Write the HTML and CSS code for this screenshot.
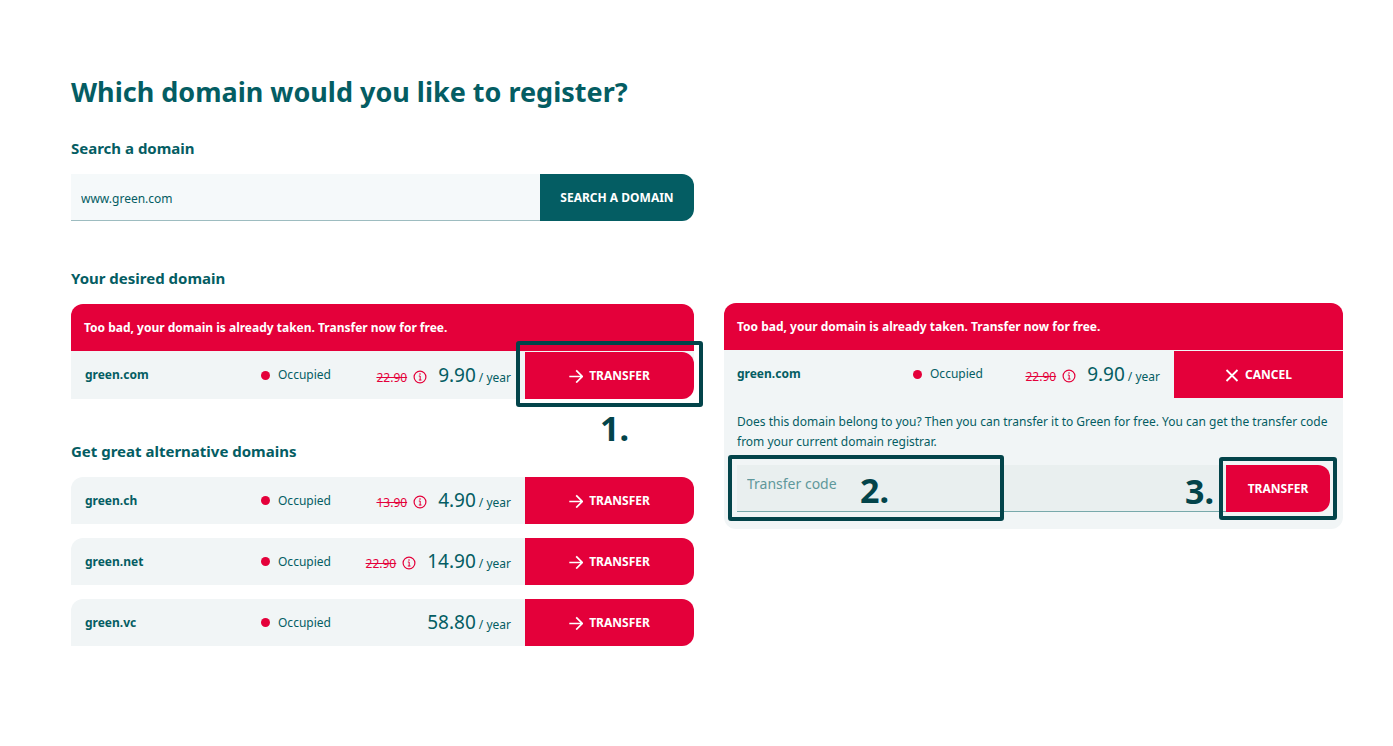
FILE: index.html
```html
<!DOCTYPE html>
<html lang="en">
<head>
<meta charset="utf-8">
<meta name="viewport" content="width=device-width, initial-scale=1">
<title>Register a domain</title>
<link rel="stylesheet" href="styles.css">
</head>
<body>
<svg class="sprite" aria-hidden="true">
  <symbol id="arrow" viewBox="0 0 14 14"><path d="M0.3 7.5H13M7.2 1.4L13.2 7.5L7.2 13.6" fill="none" stroke="currentColor" stroke-width="1.7"/></symbol>
  <symbol id="cross" viewBox="0 0 14 14"><path d="M1.5 2L12.5 13M12.5 2L1.5 13" fill="none" stroke="currentColor" stroke-width="1.8"/></symbol>
  <symbol id="info" viewBox="0 0 14 14"><circle cx="7" cy="7" r="5.9" fill="none" stroke="currentColor" stroke-width="1.2"/><path d="M5.8 6H7.2V10.2M5.8 10H8.5" fill="none" stroke="currentColor"/><circle cx="7" cy="4" r="0.8" fill="currentColor"/></symbol>
</svg>
<main class="page">
  <section class="column">
    <h1 class="title">Which domain would you like to register?</h1>
    <form class="search">
      <label class="heading" for="domain">Search a domain</label>
      <div class="field-row">
        <input class="field" id="domain" type="text" value="www.green.com">
        <button class="button button-teal" type="button">SEARCH A DOMAIN</button>
      </div>
    </form>
    <h2 class="heading">Your desired domain</h2>
    <div class="result">
      <p class="banner">Too bad, your domain is already taken. Transfer now for free.</p>
      <div class="row row-joined">
        <strong class="name">green.com</strong>
        <span class="status">Occupied</span>
        <span class="price"><s class="old">22.90</s><svg class="info"><use href="#info"/></svg><span class="amount">9.90</span><span class="unit">/ year</span></span>
        <div class="action marked mark-one">
          <button class="button" type="button"><svg class="icon"><use href="#arrow"/></svg>TRANSFER</button>
          <span class="step step-one">1.</span>
        </div>
      </div>
    </div>
    <h2 class="heading">Get great alternative domains</h2>
    <div class="list">
      <div class="row">
        <strong class="name">green.ch</strong>
        <span class="status">Occupied</span>
        <span class="price"><s class="old">13.90</s><svg class="info"><use href="#info"/></svg><span class="amount">4.90</span><span class="unit">/ year</span></span>
        <div class="action"><button class="button" type="button"><svg class="icon"><use href="#arrow"/></svg>TRANSFER</button></div>
      </div>
      <div class="row">
        <strong class="name">green.net</strong>
        <span class="status">Occupied</span>
        <span class="price"><s class="old">22.90</s><svg class="info"><use href="#info"/></svg><span class="amount">14.90</span><span class="unit">/ year</span></span>
        <div class="action"><button class="button" type="button"><svg class="icon"><use href="#arrow"/></svg>TRANSFER</button></div>
      </div>
      <div class="row">
        <strong class="name">green.vc</strong>
        <span class="status">Occupied</span>
        <span class="price"><span class="amount">58.80</span><span class="unit">/ year</span></span>
        <div class="action"><button class="button" type="button"><svg class="icon"><use href="#arrow"/></svg>TRANSFER</button></div>
      </div>
    </div>
  </section>
  <section class="column column-transfer">
    <div class="panel">
      <p class="banner">Too bad, your domain is already taken. Transfer now for free.</p>
      <div class="row row-joined">
        <strong class="name">green.com</strong>
        <span class="status">Occupied</span>
        <span class="price"><s class="old">22.90</s><svg class="info"><use href="#info"/></svg><span class="amount">9.90</span><span class="unit">/ year</span></span>
        <div class="action"><button class="button button-square" type="button"><svg class="icon"><use href="#cross"/></svg>CANCEL</button></div>
      </div>
      <p class="note">Does this domain belong to you? Then you can transfer it to Green for free. You can get the transfer code from your current domain registrar.</p>
      <form class="field-row transfer">
        <input class="field field-code" type="text" placeholder="Transfer code" aria-label="Transfer code">
        <div class="submit marked mark-three">
          <button class="button" type="button">TRANSFER</button>
          <span class="step step-three">3.</span>
        </div>
        <span class="frame-two"><span class="step step-two">2.</span></span>
      </form>
    </div>
  </section>
</main>
</body>
</html>
```
FILE: styles.css
```css
:root {
  --teal: #045d63;
  --ink: #03444a;
  --red: #e4003a;
  --pale: #f1f5f6;
}
* { box-sizing: border-box; }
body {
  margin: 0;
  background: #fff;
  color: var(--teal);
  font: 12px/20px "Noto Sans", "Open Sans", sans-serif;
}
h1, h2, p { margin: 0; }
.sprite { position: absolute; width: 0; height: 0; }
.page {
  display: grid;
  grid-template-columns: 623fr 619fr;
  gap: 30px;
  padding: 72px 50px 72px 71px;
}
.column-transfer { padding-top: 231px; }
.title { font-size: 27px; line-height: 40px; font-weight: 700; margin-bottom: 24px; }
.heading { display: block; font-size: 15px; line-height: 24px; font-weight: 700; margin-bottom: 14px; }
.search { margin-bottom: 45px; }
.field-row { display: flex; height: 47px; }
.field {
  flex: 1;
  min-width: 0;
  border: 0;
  border-bottom: 1px solid #9dbcc0;
  border-radius: 0;
  background: #f5f9fa;
  padding: 4px 10px 0;
  color: var(--teal);
  font: inherit;
}
.button {
  width: 100%;
  height: 100%;
  display: flex;
  align-items: center;
  justify-content: center;
  gap: 6px;
  border: 0;
  border-radius: 0 12px 12px 0;
  background: var(--red);
  color: #fff;
  font: inherit;
  font-weight: 700;
}
.button-teal { width: 154px; background: var(--teal); }
.button-square { border-radius: 0; }
.icon { width: 14px; height: 14px; }
.result { margin-bottom: 40px; }
.banner {
  padding: 14px 13px 13px;
  border-radius: 12px 12px 0 0;
  background: var(--red);
  color: #fff;
  font-weight: 700;
}
.list { display: grid; gap: 14px; }
.row {
  display: flex;
  align-items: center;
  height: 47px;
  padding-left: 14px;
  border-radius: 12px 12px 12px 0;
  background: var(--pale);
}
.row-joined { height: 48px; border-radius: 0 0 12px 0; }
.row-joined .action { padding-top: 1px; }
.name { width: 176px; font-weight: 700; }
.status { display: flex; align-items: center; gap: 8px; }
.status::before { content: ""; width: 9px; height: 9px; border-radius: 50%; background: var(--red); }
.price { flex: 1; display: flex; justify-content: flex-end; align-items: baseline; padding-right: 14px; }
.old { color: var(--red); }
.info { width: 14px; height: 14px; margin: 3px 11px 0 6px; color: var(--red); align-self: center; }
.amount { font-size: 19px; line-height: 24px; margin-right: 3px; }
.action { width: 169px; height: 100%; }
.panel { border-radius: 12px; background: var(--pale); padding-bottom: 17px; }
.panel .row, .panel .note { padding-left: 13px; }
.note { padding: 14px 8px 13px 13px; }
.transfer { position: relative; margin: 0 13px; }
.field-code { background: #e9efef; border-color: #78a9ab; padding: 0 10px 9px; font-size: 14px; }
.field-code::placeholder { color: #5f989b; opacity: 1; }
.submit { width: 104px; }
.marked { position: relative; }
.marked::after, .frame-two {
  content: "";
  position: absolute;
  border: 4px solid var(--ink);
  border-radius: 3px;
  pointer-events: none;
}
.mark-one::after { inset: -10px -9px -8px; }
.mark-three::after { inset: -8px -7px; }
.frame-two { left: -9px; top: -10px; width: 276px; height: 66px; }
.step { position: absolute; color: var(--ink); font-size: 34px; line-height: 40px; font-weight: 700; }
.step-one { left: 75px; top: 57px; }
.step-two { left: 128px; top: 11px; }
.step-three { right: 116px; top: 6px; }
```
